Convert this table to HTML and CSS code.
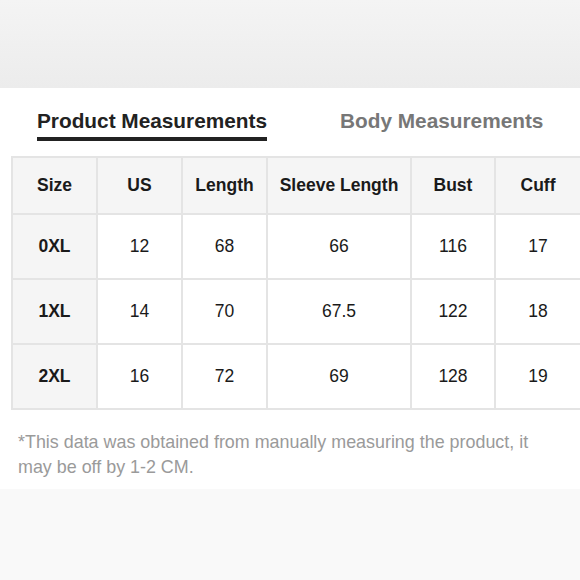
FILE: index.html
```html
<!DOCTYPE html>
<html>
<head>
<meta charset="utf-8">
<link rel="stylesheet" href="styles.css">
</head>
<body>
<div class="top-band"></div>
<section class="panel">
  <div class="tabs">
    <div class="tab active">Product Measurements</div>
    <div class="tab">Body Measurements</div>
  </div>
  <table class="size-table">
    <colgroup>
      <col class="c1"><col class="c2"><col class="c3"><col class="c4"><col class="c5"><col class="c6">
    </colgroup>
    <thead>
      <tr><th>Size</th><th>US</th><th>Length</th><th>Sleeve Length</th><th>Bust</th><th>Cuff</th></tr>
    </thead>
    <tbody>
      <tr><th>0XL</th><td>12</td><td>68</td><td>66</td><td>116</td><td>17</td></tr>
      <tr><th>1XL</th><td>14</td><td>70</td><td>67.5</td><td>122</td><td>18</td></tr>
      <tr><th>2XL</th><td>16</td><td>72</td><td>69</td><td>128</td><td>19</td></tr>
    </tbody>
  </table>
  <p class="note">*This data was obtained from manually measuring the product, it may be off by 1-2 CM.</p>
</section>
<div class="bottom-band"></div>
</body>
</html>
```

FILE: styles.css
```css
html, body {
  margin: 0;
  padding: 0;
  background: #f9f9f9;
  font-family: "Liberation Sans", Arial, sans-serif;
}

.top-band {
  height: 88px;
  background: linear-gradient(180deg, #f4f4f4 0%, #ececec 100%);
}

.panel {
  background: #ffffff;
  padding: 21px 0 9px 11px;
}

.tabs {
  display: flex;
  padding-left: 26px;
  gap: 73px;
}

.tab {
  font-size: 20.8px;
  font-weight: bold;
  color: #777777;
  line-height: 24px;
  padding-bottom: 4px;
  border-bottom: 4px solid transparent;
}

.tab.active {
  color: #222222;
  border-bottom-color: #222222;
}

.size-table {
  margin-top: 15px;
  width: 569px;
  border-collapse: collapse;
  table-layout: fixed;
  border: 2px solid #e4e4e4;
}

.c1, .c2, .c3 { width: 85px; }
.c4 { width: 144px; }
.c5 { width: 84px; }
.c6 { width: 86px; }

.size-table th,
.size-table td {
  border: 2px solid #e4e4e4;
  text-align: center;
  padding: 0;
  font-size: 17.5px;
  color: #1a1a1a;
}

.size-table thead th {
  height: 55px;
  background: #f5f5f5;
  font-weight: bold;
}

.size-table tbody th {
  background: #f5f5f5;
  font-weight: bold;
}

.size-table tbody tr {
  height: 65px;
}

.size-table td {
  font-weight: normal;
}

.note {
  margin: 20px 0 0 7px;
  padding-right: 40px;
  font-size: 17.9px;
  line-height: 25px;
  color: #9a9a9a;
}
```
